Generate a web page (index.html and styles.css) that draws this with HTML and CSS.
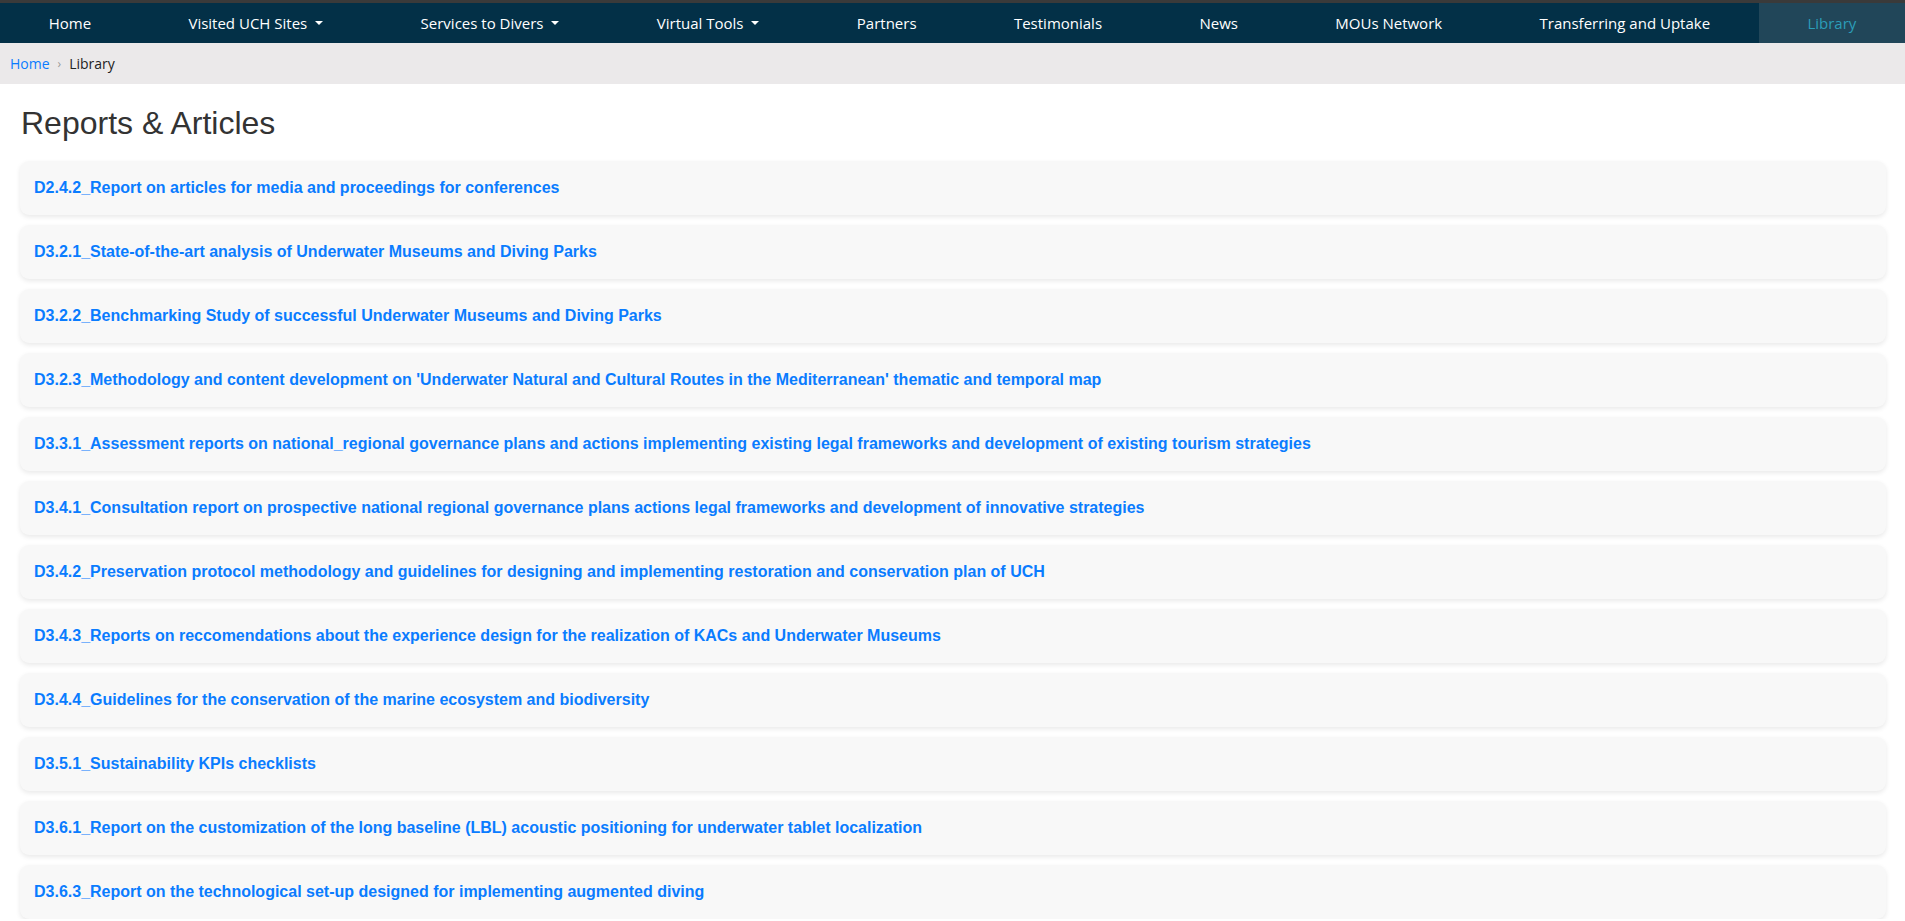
FILE: index.html
```html
<!DOCTYPE html>
<html lang="en">
<head>
<meta charset="utf-8">
<title>Library - Reports &amp; Articles</title>
<link rel="stylesheet" href="styles.css">
</head>
<body>
<header class="topbar">
  <nav class="mainnav">
    <a class="nav-item" href="#">Home</a>
    <a class="nav-item dropdown" href="#">Visited UCH Sites</a>
    <a class="nav-item dropdown" href="#">Services to Divers</a>
    <a class="nav-item dropdown" href="#">Virtual Tools</a>
    <a class="nav-item" href="#">Partners</a>
    <a class="nav-item" href="#">Testimonials</a>
    <a class="nav-item" href="#">News</a>
    <a class="nav-item" href="#">MOUs Network</a>
    <a class="nav-item" href="#">Transferring and Uptake</a>
    <a class="nav-item active" href="#">Library</a>
  </nav>
</header>
<div class="breadcrumb">
  <a href="#" class="crumb-link">Home</a>
  <span class="crumb-sep">›</span>
  <span class="crumb-current">Library</span>
</div>
<main class="content">
  <h1 class="page-title">Reports &amp; Articles</h1>
  <ul class="doc-list">
    <li class="doc-card"><a href="#">D2.4.2_Report on articles for media and proceedings for conferences</a></li>
    <li class="doc-card"><a href="#">D3.2.1_State-of-the-art analysis of Underwater Museums and Diving Parks</a></li>
    <li class="doc-card"><a href="#">D3.2.2_Benchmarking Study of successful Underwater Museums and Diving Parks</a></li>
    <li class="doc-card"><a href="#">D3.2.3_Methodology and content development on 'Underwater Natural and Cultural Routes in the Mediterranean' thematic and temporal map</a></li>
    <li class="doc-card"><a href="#">D3.3.1_Assessment reports on national_regional governance plans and actions implementing existing legal frameworks and development of existing tourism strategies</a></li>
    <li class="doc-card"><a href="#">D3.4.1_Consultation report on prospective national regional governance plans actions legal frameworks and development of innovative strategies</a></li>
    <li class="doc-card"><a href="#">D3.4.2_Preservation protocol methodology and guidelines for designing and implementing restoration and conservation plan of UCH</a></li>
    <li class="doc-card"><a href="#">D3.4.3_Reports on reccomendations about the experience design for the realization of KACs and Underwater Museums</a></li>
    <li class="doc-card"><a href="#">D3.4.4_Guidelines for the conservation of the marine ecosystem and biodiversity</a></li>
    <li class="doc-card"><a href="#">D3.5.1_Sustainability KPIs checklists</a></li>
    <li class="doc-card"><a href="#">D3.6.1_Report on the customization of the long baseline (LBL) acoustic positioning for underwater tablet localization</a></li>
    <li class="doc-card"><a href="#">D3.6.3_Report on the technological set-up designed for implementing augmented diving</a></li>
  </ul>
</main>
</body>
</html>
```

FILE: styles.css
```css
* { box-sizing: border-box; }
html, body { margin: 0; padding: 0; }
body {
  background: #ffffff;
  font-family: "Liberation Sans", Arial, sans-serif;
  color: #333;
}
.topbar {
  background: #3a3a3a;
  padding-top: 3px;
}
.mainnav {
  display: flex;
  background: #033047;
  height: 40px;
}
.nav-item {
  flex: 1 1 auto;
  display: flex;
  align-items: center;
  justify-content: center;
  color: #ffffff;
  text-decoration: none;
  font-family: "Open Sans", "Noto Sans", sans-serif;
  font-size: 15px;
  white-space: nowrap;
  padding: 0 8px;
}
.nav-item.dropdown::after {
  content: "";
  display: inline-block;
  margin-left: 8px;
  border-left: 4px solid transparent;
  border-right: 4px solid transparent;
  border-top: 4px solid #ffffff;
}
.nav-item.active {
  background: #214659;
  color: #2b9db8;
}
.breadcrumb {
  background: #ebe9ea;
  height: 41px;
  display: flex;
  align-items: center;
  padding-left: 10px;
  font-family: "Open Sans", "Noto Sans", sans-serif;
  font-size: 14px;
}
.crumb-link { color: #0a7cff; text-decoration: none; }
.crumb-sep { color: #999; margin: 0 8px; font-size: 12px; }
.crumb-current { color: #222; }
.content {
  padding: 0 19px 0 20px;
}
.page-title {
  font-family: "Liberation Sans", Arial, sans-serif;
  font-weight: normal;
  font-size: 32px;
  line-height: 38px;
  color: #333;
  margin: 20px 0 19px 1px;
}
.doc-list {
  list-style: none;
  margin: 0;
  padding: 0;
  display: flex;
  flex-direction: column;
  gap: 10px;
}
.doc-card {
  background: #f8f8f8;
  border-radius: 9px;
  box-shadow: 0 2px 5px rgba(0,0,0,0.09);
  padding: 18px 14px;
  min-height: 54px;
}
.doc-card a {
  color: #0a7cff;
  text-decoration: none;
  font-weight: bold;
  font-size: 16px;
  line-height: 18px;
}
```
